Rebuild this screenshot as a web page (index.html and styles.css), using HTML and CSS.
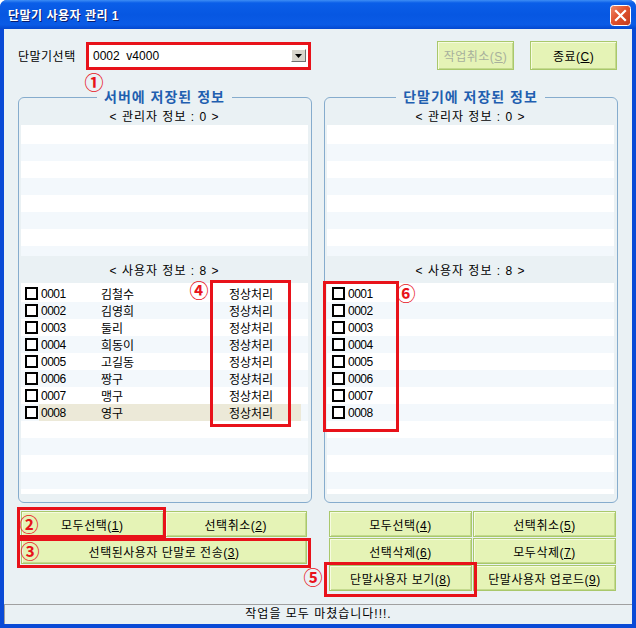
FILE: index.html
```html
<!DOCTYPE html>
<html lang="ko">
  <head>
    <meta charset="UTF-8" />
    <title>단말기 사용자 관리 1</title>
    <link rel="stylesheet" href="styles.css">
  </head>
  <body>
    <div class="window">
      <div class="titlebar">
        <span class="title">단말기 사용자 관리 1</span>
        <span class="close-btn">
          <svg width="21" height="21" viewBox="0 0 21 21">
            <defs>
              <linearGradient id="closeFill" x1="0" y1="0" x2="1" y2="1">
                <stop offset="0" stop-color="#F08C6C" />
                <stop offset="0.45" stop-color="#E0522E" />
                <stop offset="1" stop-color="#C23A1C" />
              </linearGradient>
            </defs>
            <rect x="0.5" y="0.5" width="20" height="20" rx="3" fill="url(#closeFill)" stroke="#fff" />
            <path d="M6 6 L15 15 M15 6 L6 15" stroke="#fff" stroke-width="2.2" stroke-linecap="square" />
          </svg>
        </span>
      </div>

      <div class="client">
        <div class="content">
          <div class="top-row">
            <span class="field-label">단말기선택</span>
            <div class="combo">
              <span class="combo-value">0002  v4000</span>
              <span class="combo-arrow">
                <svg width="7" height="4" viewBox="0 0 7 4"><path d="M0 0 H7 L3.5 4 Z" fill="#000" /></svg>
              </span>
            </div>
            <div class="top-actions">
              <button class="btn btn-cancel" disabled>작업취소(<u>S</u>)</button>
              <button class="btn btn-close">종료(<u>C</u>)</button>
            </div>
          </div>

          <div class="groups">
            <fieldset class="group group-server">
              <legend>서버에 저장된 정보</legend>
              <div class="list-head">&lt; 관리자 정보 : 0 &gt;</div>
              <div class="list list-admin"></div>
              <div class="list-head list-head-user">&lt; 사용자 정보 : 8 &gt;</div>
              <div class="list list-user">
                <div class="row"><span class="check"></span><div class="cells"><span class="cell-id">0001</span><span class="cell-name">김철수</span><span class="cell-state">정상처리</span></div></div>
                <div class="row"><span class="check"></span><div class="cells"><span class="cell-id">0002</span><span class="cell-name">김영희</span><span class="cell-state">정상처리</span></div></div>
                <div class="row"><span class="check"></span><div class="cells"><span class="cell-id">0003</span><span class="cell-name">둘리</span><span class="cell-state">정상처리</span></div></div>
                <div class="row"><span class="check"></span><div class="cells"><span class="cell-id">0004</span><span class="cell-name">희동이</span><span class="cell-state">정상처리</span></div></div>
                <div class="row"><span class="check"></span><div class="cells"><span class="cell-id">0005</span><span class="cell-name">고길동</span><span class="cell-state">정상처리</span></div></div>
                <div class="row"><span class="check"></span><div class="cells"><span class="cell-id">0006</span><span class="cell-name">짱구</span><span class="cell-state">정상처리</span></div></div>
                <div class="row"><span class="check"></span><div class="cells"><span class="cell-id">0007</span><span class="cell-name">맹구</span><span class="cell-state">정상처리</span></div></div>
                <div class="row row-selected"><span class="check"></span><div class="cells"><span class="cell-id">0008</span><span class="cell-name">영구</span><span class="cell-state">정상처리</span></div></div>
              </div>
            </fieldset>

            <fieldset class="group group-device">
              <legend>단말기에 저장된 정보</legend>
              <div class="list-head">&lt; 관리자 정보 : 0 &gt;</div>
              <div class="list list-admin"></div>
              <div class="list-head list-head-user">&lt; 사용자 정보 : 8 &gt;</div>
              <div class="list list-user">
                <div class="row"><span class="check"></span><span class="cell-id">0001</span></div>
                <div class="row"><span class="check"></span><span class="cell-id">0002</span></div>
                <div class="row"><span class="check"></span><span class="cell-id">0003</span></div>
                <div class="row"><span class="check"></span><span class="cell-id">0004</span></div>
                <div class="row"><span class="check"></span><span class="cell-id">0005</span></div>
                <div class="row"><span class="check"></span><span class="cell-id">0006</span></div>
                <div class="row"><span class="check"></span><span class="cell-id">0007</span></div>
                <div class="row"><span class="check"></span><span class="cell-id">0008</span></div>
              </div>
            </fieldset>
          </div>

          <div class="button-area">
            <div class="btn-grid btn-grid-left">
              <button class="btn">모두선택(<u>1</u>)</button>
              <button class="btn">선택취소(<u>2</u>)</button>
              <button class="btn btn-wide">선택된사용자 단말로 전송(<u>3</u>)</button>
            </div>
            <div class="btn-grid btn-grid-right">
              <button class="btn">모두선택(<u>4</u>)</button>
              <button class="btn">선택취소(<u>5</u>)</button>
              <button class="btn">선택삭제(<u>6</u>)</button>
              <button class="btn">모두삭제(<u>7</u>)</button>
              <button class="btn">단말사용자 보기(<u>8</u>)</button>
              <button class="btn">단말사용자 업로드(<u>9</u>)</button>
            </div>
          </div>
        </div>

        <div class="statusbar">작업을 모두 마쳤습니다!!!.</div>
      </div>

      <!-- red callouts drawn on top of the dialog -->
      <div class="mark mark-combo"></div>
      <div class="mark mark-2"></div>
      <div class="mark mark-3"></div>
      <div class="mark mark-4"></div>
      <div class="mark mark-5"></div>
      <div class="mark mark-6"></div>
      <span class="num num-1">①</span>
      <span class="num num-2">②</span>
      <span class="num num-3">③</span>
      <span class="num num-4">④</span>
      <span class="num num-5">⑤</span>
      <span class="num num-6">⑥</span>
    </div>
  </body>
</html>
```

FILE: styles.css
```css
* {
  box-sizing: border-box;
}

body {
  margin: 0;
  background: #fff;
  font-family: "Liberation Sans", "Noto Sans CJK KR", sans-serif;
  font-size: 12px;
  color: #000;
}

.window {
  position: relative;
  width: 636px;
  height: 628px;
  display: flex;
  flex-direction: column;
  background: #0A4AD6;
  border-radius: 7px 7px 0 0;
  overflow: hidden;
}

/* XP style caption */
.titlebar {
  height: 29px;
  flex: none;
  display: flex;
  align-items: center;
  justify-content: space-between;
  padding: 0 5px 0 8px;
  background: linear-gradient(
    to bottom,
    #3D8DF5 0,
    #0A5EE8 3px,
    #0757E2 50%,
    #0A5BE6 85%,
    #0448D0 100%
  );
}

.title {
  color: #fff;
  font-weight: 700;
  font-size: 12px;
  letter-spacing: 0.5px;
  text-shadow: 1px 1px #0A1C6E;
}

.close-btn {
  display: flex;
  width: 21px;
  height: 21px;
  margin-top: 1px;
}

.client {
  flex: 1;
  margin: 0 4px 4px;
  background: #EAF1F4;
  display: flex;
  flex-direction: column;
}

.content {
  flex: 1;
  padding: 12px 14px 0;
}

.top-row {
  display: flex;
  align-items: center;
  height: 29px;
}

.field-label {
  width: 71px;
  letter-spacing: 0.5px;
}

.combo {
  width: 219px;
  height: 22px;
  background: #fff;
  display: flex;
  align-items: center;
  padding-left: 4px;
}

.combo-value {
  white-space: pre;
}

.combo-arrow {
  margin-left: auto;
  margin-right: 2px;
  width: 15px;
  height: 13px;
  display: flex;
  align-items: center;
  justify-content: center;
  background: #D8D5CC;
  border: 1px solid;
  border-color: #fff #6F6F6F #6F6F6F #fff;
}

.top-actions {
  margin-left: auto;
  margin-right: 1px;
  display: flex;
  gap: 16px;
}

.btn {
  font: inherit;
  color: #000;
  letter-spacing: 0.5px;
  background: #E5F3B6;
  border: 1px solid #A9C86B;
  box-shadow: inset 1px 1px #F6FBE0, inset -1px -1px #C4DA8E;
  padding: 0;
  cursor: pointer;
}

.btn u {
  text-decoration: underline;
  text-underline-offset: 1px;
}

.btn-cancel {
  width: 77px;
  height: 29px;
  color: #A7B09C;
}

.btn-close {
  width: 87px;
  height: 29px;
}

.groups {
  display: grid;
  grid-template-columns: 294px 294px;
  gap: 12px;
  margin-top: 19px;
}

.group {
  margin: 0;
  padding: 0 3px 8px 2px;
  border: 1px solid #86ACCD;
  border-radius: 6px;
  height: 414px;
  min-width: 0;
}

.group legend {
  margin: 0 auto;
  padding: 0 7px;
  font-size: 14px;
  font-weight: 700;
  line-height: 16px;
  color: #1F5FB0;
  letter-spacing: 1px;
}

.list-head {
  height: 20px;
  display: flex;
  align-items: center;
  justify-content: center;
  letter-spacing: 1px;
}

.list-head-user {
  height: 27px;
}

.list {
  background-color: #fff;
  border-top: 2px solid #fff;
  background-image: repeating-linear-gradient(
    to bottom,
    #fff 0 17px,
    #F3F8FC 17px 34px
  );
}

.list-admin {
  height: 131px;
}

.list-user {
  height: 211px;
}

.row {
  display: flex;
  align-items: center;
  height: 17px;
}

.check {
  flex: none;
  width: 13px;
  height: 13px;
  border: 2px solid #000;
  background: #fff;
  margin-left: 4px;
}

.cells {
  display: flex;
  align-items: center;
  height: 17px;
  width: 262px;
  margin-left: 1px;
}

.row-selected .cells {
  background: #ECE9D8;
}

.cell-id {
  width: 62px;
  padding-left: 2px;
  letter-spacing: -0.5px;
}

.cell-name {
  width: 110px;
}

.cell-state {
  width: 80px;
  text-align: center;
}

.group-device .check {
  margin-left: 5px;
}

.group-device .cell-id {
  padding-left: 3px;
}

.button-area {
  display: grid;
  grid-template-columns: 294px 294px;
  gap: 12px;
  margin-top: 8px;
}

.btn-grid {
  display: grid;
  grid-template-columns: 1fr 1fr;
  grid-auto-rows: 26px;
  gap: 1px;
}

.btn-grid-left {
  padding: 0 5px 0 3px;
}

.btn-grid-right {
  padding: 0 2px 0 5px;
}

.btn-wide {
  grid-column: span 2;
}

.statusbar {
  flex: none;
  height: 20px;
  border-top: 1px solid #A0A0A0;
  border-left: 1px solid #A0A0A0;
  line-height: 18px;
  text-align: center;
  letter-spacing: 1px;
}

/* callout boxes and numbers */
.mark {
  position: absolute;
  border: 3px solid #E8121A;
}

.mark-combo { left: 86px; top: 42px; width: 225px; height: 28px; }
.mark-2 { left: 17px; top: 507px; width: 149px; height: 31px; }
.mark-3 { left: 17px; top: 538px; width: 294px; height: 30px; }
.mark-4 { left: 210px; top: 280px; width: 81px; height: 147px; }
.mark-5 { left: 324px; top: 562px; width: 153px; height: 35px; }
.mark-6 { left: 323px; top: 281px; width: 76px; height: 151px; }

.num {
  position: absolute;
  width: 18px;
  height: 18px;
  display: flex;
  align-items: center;
  justify-content: center;
  font-family: "Noto Sans CJK KR", sans-serif;
  font-size: 19px;
  font-weight: 700;
  line-height: 18px;
  color: #E8121A;
}

.num-1 { left: 85px; top: 73px; }
.num-2 { left: 20px; top: 515px; }
.num-3 { left: 21px; top: 542px; }
.num-4 { left: 190px; top: 281px; }
.num-5 { left: 304px; top: 568px; }
.num-6 { left: 397px; top: 284px; }
```
